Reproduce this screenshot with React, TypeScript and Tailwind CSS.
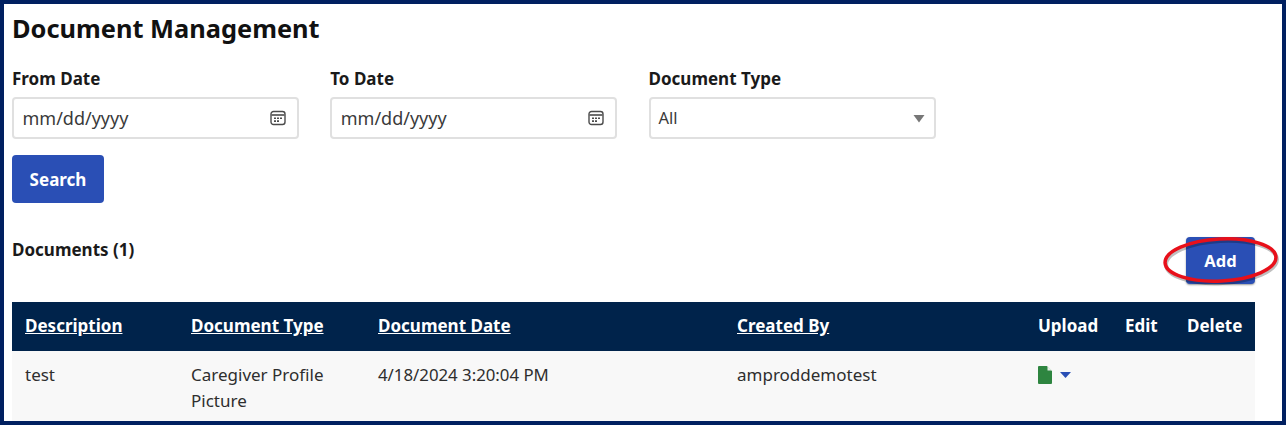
import React from "react";

function CalendarIcon() {
  return (
    <svg width="16" height="16" viewBox="0 0 16 16" fill="none" className="shrink-0">
      <rect x="1" y="1.5" width="14" height="13" rx="2.5" stroke="#4b4b4b" strokeWidth="1.4" />
      <path d="M1.5 5h13" stroke="#4b4b4b" strokeWidth="1.6" />
      <path d="M4 7.5h2v1.6H4zM7 7.5h2v1.6H7zM10 7.5h2v1.6h-2zM4 10.3h2v1.6H4zM7 10.3h2v1.6H7z" fill="#4b4b4b" />
    </svg>
  );
}

function DateField({ label }: { label: string }) {
  return (
    <div className="w-[287px]">
      <div className="h-[31px] pt-[0.5px] text-[17px] leading-[24px] font-bold text-[#1a1a1a]">{label}</div>
      <div className="h-[42px] rounded-[4px] border-2 border-[#e0e0e0] bg-white flex items-center justify-between pl-[8.5px] pr-[11px] text-[18px] text-[#3a3a3a]">
        <span>mm/dd/yyyy</span>
        <CalendarIcon />
      </div>
    </div>
  );
}

const th = "px-[13px] pb-[1px] text-left font-bold text-white text-[17px] align-middle";
const td = "px-[13px] pt-[11px] pb-[8px]";

export default function App() {
  return (
    <div className="relative w-[1286px] h-[425px] overflow-hidden border-4 border-[#002060] bg-white font-['Noto_Sans',sans-serif] text-[#1f1f1f] pl-[8px] pr-[27px]">
      <h1 className="text-[25.4px] leading-[32px] font-bold text-[#111] pt-[8px] pb-[1px]">Document Management</h1>
      <div className="flex gap-[31.25px] mt-[21px]">
        <DateField label="From Date" />
        <DateField label="To Date" />
        <div className="w-[287.5px]">
          <div className="h-[31px] pt-[0.5px] text-[17px] leading-[24px] font-bold text-[#1a1a1a]">Document Type</div>
          <div className="h-[42px] rounded-[4px] border-2 border-[#e0e0e0] bg-white flex items-center justify-between pl-[8px] pr-[9px] text-[16.5px] text-[#3a3a3a]">
            <span>All</span>
            <svg width="12" height="9" viewBox="0 0 12 9"><path d="M0.5 1h11L6 8.5z" fill="#777" /></svg>
          </div>
        </div>
      </div>
      <button className="block mt-[16px] w-[92px] h-[48px] pt-[1px] rounded-[4px] bg-[#2a4fb5] text-white text-[17px] font-bold">Search</button>
      <div className="flex justify-between items-start mt-[34px]">
        <div className="text-[17px] leading-[24px] font-bold text-[#1a1a1a] pt-[1px]">Documents (1)</div>
        <button className="w-[69px] h-[47px] pt-[2px] rounded-[4px] bg-[#2a4fb5] text-white text-[16.5px] font-bold shadow-[0_1px_2px_rgba(0,0,0,0.4)]">Add</button>
      </div>
      <table className="mt-[18px] w-[1243px] table-fixed border-collapse">
        <colgroup>
          <col className="w-[166px]" />
          <col className="w-[187px]" />
          <col className="w-[359px]" />
          <col className="w-[301px]" />
          <col className="w-[87px]" />
          <col className="w-[62px]" />
          <col className="w-[81px]" />
        </colgroup>
        <thead>
          <tr className="h-[49px] bg-[#00234b]">
            <th className={th}><span className="underline">Description</span></th>
            <th className={th}><span className="underline">Document Type</span></th>
            <th className={th}><span className="underline">Document Date</span></th>
            <th className={th}><span className="underline">Created By</span></th>
            <th className={th}>Upload</th>
            <th className={th}>Edit</th>
            <th className={th}>Delete</th>
          </tr>
        </thead>
        <tbody>
          <tr className="bg-[#f8f8f8] text-[17px] leading-[26px] text-[#2e2e2e] align-top">
            <td className={td}>test</td>
            <td className={td}>Caregiver Profile Picture</td>
            <td className={td}>
              <span className="text-[16.8px]">4/18/2024 3:20:04 PM</span>
            </td>
            <td className={td}>amproddemotest</td>
            <td className={td}>
              <div className="flex items-center gap-[8px] h-[26px]">
                <svg width="14" height="18" viewBox="0 0 14 18">
                  <path d="M1 0h8l5 5v12a1 1 0 0 1-1 1H1a1 1 0 0 1-1-1V1a1 1 0 0 1 1-1z" fill="#2e8540" />
                  <path d="M9.5 0v4.5h4.500z" fill="#e3efe5" />
                </svg>
                <svg width="11" height="6" viewBox="0 0 11 6"><path d="M0 0h11L5.500 6z" fill="#2a4fb5" /></svg>
              </div>
            </td>
            <td />
            <td />
          </tr>
        </tbody>
      </table>
      <svg className="absolute left-[1155px] top-[226px] pointer-events-none" width="125" height="60" viewBox="0 0 125 60" fill="none">
        <ellipse cx="62.5" cy="32" rx="55.5" ry="21" transform="rotate(-3 62.5 32)" stroke="#000" strokeOpacity="0.25" strokeWidth="4" />
        <ellipse cx="61.5" cy="30" rx="55.5" ry="21" transform="rotate(-3 61.5 30)" stroke="#e8101a" strokeWidth="3.5" />
      </svg>
    </div>
  );
}
